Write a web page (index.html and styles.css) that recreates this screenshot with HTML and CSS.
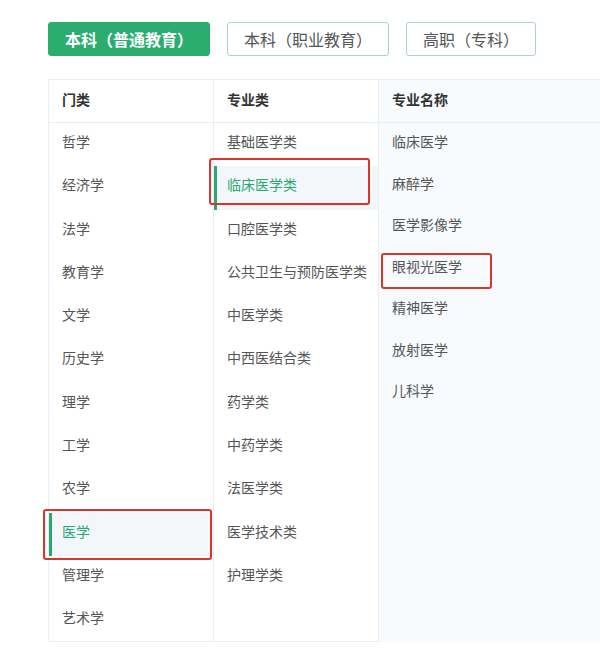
FILE: index.html
```html
<!DOCTYPE html>
<html lang="zh-CN">
<head>
    <meta charset="UTF-8">
    <meta name="viewport" content="width=device-width, initial-scale=1.0">
    <title>专业目录</title>
    <link rel="stylesheet" href="styles.css">
</head>
<body>
    <div class="page">
        <div class="tabs">
            <div class="tab active">本科（普通教育）</div>
            <div class="tab">本科（职业教育）</div>
            <div class="tab">高职（专科）</div>
        </div>

        <div class="table">
            <div class="col col-cat">
                <div class="head">门类</div>
                <ul class="list">
                    <li>哲学</li>
                    <li>经济学</li>
                    <li>法学</li>
                    <li>教育学</li>
                    <li>文学</li>
                    <li>历史学</li>
                    <li>理学</li>
                    <li>工学</li>
                    <li>农学</li>
                    <li class="selected mark mark-cat">医学</li>
                    <li>管理学</li>
                    <li>艺术学</li>
                </ul>
            </div>

            <div class="col col-class">
                <div class="head">专业类</div>
                <ul class="list">
                    <li>基础医学类</li>
                    <li class="selected mark mark-class">临床医学类</li>
                    <li>口腔医学类</li>
                    <li>公共卫生与预防医学类</li>
                    <li>中医学类</li>
                    <li>中西医结合类</li>
                    <li>药学类</li>
                    <li>中药学类</li>
                    <li>法医学类</li>
                    <li>医学技术类</li>
                    <li>护理学类</li>
                </ul>
            </div>

            <div class="col col-name">
                <div class="head">专业名称</div>
                <ul class="list">
                    <li>临床医学</li>
                    <li>麻醉学</li>
                    <li>医学影像学</li>
                    <li class="mark mark-name">眼视光医学</li>
                    <li>精神医学</li>
                    <li>放射医学</li>
                    <li>儿科学</li>
                </ul>
            </div>
        </div>
    </div>
</body>
</html>
```

FILE: styles.css
```css
body {
    margin: 0;
    background-color: #fff;
    font-family: "Noto Sans CJK SC", "Noto Sans", sans-serif;
    color: #555;
}

.page {
    padding: 22px 0 0 48px;
}

.tabs {
    display: flex;
    gap: 17px;
}

.tab {
    height: 34px;
    line-height: 32px;
    padding: 0 16px;
    border: 1px solid #a9d6c4;
    border-radius: 3px;
    font-size: 16px;
    color: #555;
    box-sizing: border-box;
    text-spacing-trim: space-all;
}

.tab.active {
    background-color: #2bad70;
    border-color: #2bad70;
    color: #fff;
    font-weight: bold;
}

.table {
    display: grid;
    grid-template-columns: 164px 165px 1fr;
    margin-top: 23px;
    height: 561px;
    border-top: 1px solid #eaeef1;
    border-left: 1px solid #eaeef1;
    border-bottom: 1px solid #eaeef1;
}

.col + .col {
    border-left: 1px solid #eaeef1;
}

.col-name {
    background-color: #f8fbfd;
}

.head {
    height: 42px;
    line-height: 38px;
    padding-left: 13px;
    border-bottom: 1px solid #eaeef1;
    font-size: 14px;
    font-weight: bold;
    color: #333;
}

.list {
    list-style: none;
    margin: 0;
    padding: 0;
}

.list li {
    position: relative;
    height: 43.3px;
    line-height: 37px;
    padding-left: 13px;
    font-size: 14px;
}

.col-name .list li {
    height: 41.5px;
    line-height: 37px;
}

.list li.selected {
    background-color: #f3f7fa;
    color: #2aa873;
    border-left: 3px solid #2aa873;
    padding-left: 10px;
}

/* red annotation boxes */
.mark::after {
    content: "";
    position: absolute;
    border: 2px solid #d8352c;
    border-radius: 3px;
}

.mark-cat::after {
    left: -9px;
    top: -4px;
    width: 165px;
    height: 47px;
}

.mark-class::after {
    left: -8px;
    top: -8px;
    width: 157px;
    height: 43px;
}

.mark-name::after {
    left: 2px;
    top: 5px;
    width: 107px;
    height: 32px;
}
```
